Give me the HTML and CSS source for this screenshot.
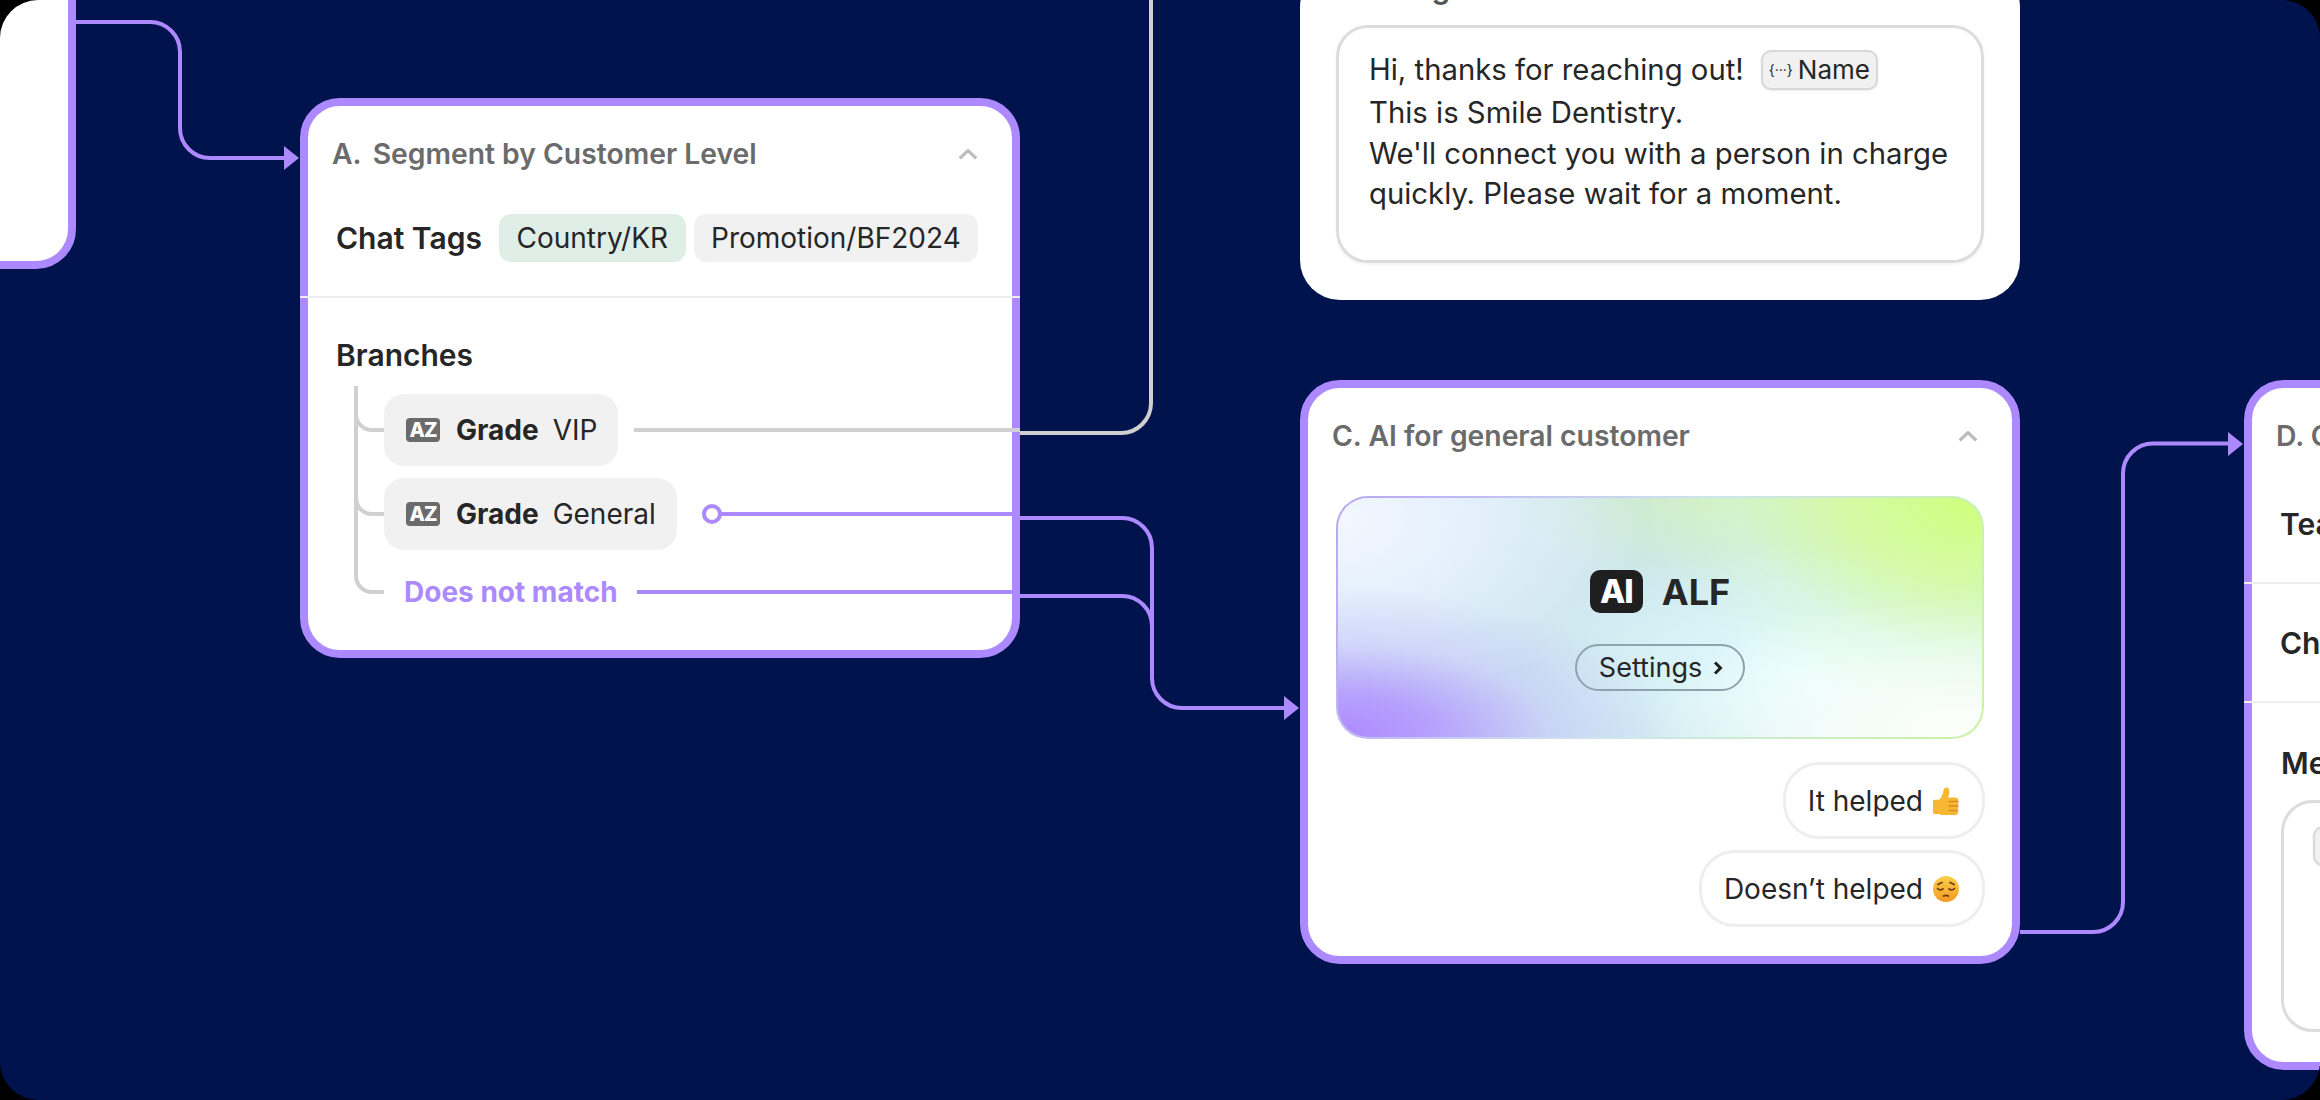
FILE: index.html
```html
<!DOCTYPE html>
<html lang="en">
<head>
    <meta charset="UTF-8">
    <title>Workflow</title>
    <link rel="stylesheet" href="styles.css">
</head>
<body>
<div class="canvas">

    <div class="node node-start"></div>

    <div class="node node-a">
        <div class="node-head">
            <div class="head-title"><span class="head-letter">A.</span>Segment by Customer Level</div>
            <svg class="chev" viewBox="0 0 18 10"><path d="M1.5 8.500 9 1.500l7.500 7"/></svg>
        </div>
        <div class="tag-row">
            <div class="label">Chat Tags</div>
            <div class="tag tag-green">Country/KR</div>
            <div class="tag">Promotion/BF2024</div>
        </div>
        <div class="divider"></div>
        <div class="branches">
            <div class="label">Branches</div>
            <div class="branch-list">
                <div class="branch"><span class="az">AZ</span><b>Grade</b><span>VIP</span></div>
                <div class="branch"><span class="az">AZ</span><b>Grade</b><span>General</span></div>
                <div class="branch-else">Does not match</div>
            </div>
        </div>
    </div>

    <div class="node node-b">
        <div class="label">Message</div>
        <div class="msg-box">
            <div class="msg-first">Hi, thanks for reaching out!<span class="chip"><span class="chip-icon">{···}</span>Name</span></div>
            <div>This is Smile Dentistry.</div>
            <div>We'll connect you with a person in charge</div>
            <div>quickly. Please wait for a moment.</div>
        </div>
    </div>

    <div class="node node-c">
        <div class="node-head">
            <div class="head-title">C. AI for general customer</div>
            <svg class="chev" viewBox="0 0 18 10"><path d="M1.5 8.500 9 1.500l7.500 7"/></svg>
        </div>
        <div class="hero">
            <div class="hero-title"><span class="ai-badge">AI</span>ALF</div>
            <div class="settings">Settings
                <svg class="settings-arrow" viewBox="0 0 10 14"><path d="M2 1.500 7.500 7 2 12.500"/></svg>
            </div>
        </div>
        <div class="replies">
            <div class="reply">It helped
                <svg class="emoji" viewBox="0 0 28 28">
                    <path fill="#f7b733" d="M1 14.500c0-1 .8-1.700 1.800-1.700h4.200c2.300-1.900 3.800-5 4.400-8.800C11.700 1.800 13 .5 14.500.5c1.900 0 2.800 1.700 2.800 3.700 0 2.200-.5 4.400-1.100 6.300h7.700c1.400 0 2.300 1 2.300 2.300v12.200c0 1.900-1.300 3-3 3H10.500c-1.300 0-2.500-.3-3.500-1H2.800C1.800 27 1 26.200 1 25.200z"/>
                    <path fill="none" stroke="#d98e1f" stroke-width="1.300" stroke-linecap="round" d="M17 14.500h9M17 19h9M17 23.500h8"/>
                </svg>
            </div>
            <div class="reply">Doesn’t helped
                <svg class="emoji" viewBox="0 0 28 28">
                    <defs>
                        <linearGradient id="faceFill" x1="0" y1="0" x2="0" y2="1">
                            <stop offset="0" stop-color="#fbcf4a"/>
                            <stop offset="1" stop-color="#f49a25"/>
                        </linearGradient>
                    </defs>
                    <circle cx="14" cy="14" r="13" fill="url(#faceFill)"/>
                    <path fill="none" stroke="#6b3f10" stroke-width="1.700" stroke-linecap="round" d="M5.500 13.500c1.500 1.700 4 1.700 5.500.3M17 13.800c1.500 1.400 4 1.400 5.500-.3M5.800 9.500 10 7.500M22.200 9.500 18 7.500M11.500 21c1.500-.8 3.500-.8 5 0"/>
                </svg>
            </div>
        </div>
    </div>

    <div class="node node-d">
        <div class="node-head">
            <div class="head-title">D. Connect to agent</div>
        </div>
        <div class="d-row d-row-team"><div class="label">Team</div></div>
        <div class="divider"></div>
        <div class="d-row"><div class="label">Chat Tags</div></div>
        <div class="divider"></div>
        <div class="d-msg">
            <div class="label">Message</div>
            <div class="d-box"><span class="chip d-chip">Name</span></div>
        </div>
    </div>

    <svg class="wires" viewBox="0 0 2320 1100">
        <g class="wire-grey">
            <path d="M356 386V576A16 16 0 0 0 372 592H384"/>
            <path d="M356 414A16 16 0 0 0 372 430H384"/>
            <path d="M356 498A16 16 0 0 0 372 514H384"/>
            <path d="M634 430H1020"/>
            <path d="M1020 433H1121A30 30 0 0 0 1151 403V0"/>
        </g>
        <g class="wire">
            <path d="M76 22H150A30 30 0 0 1 180 52V128A30 30 0 0 0 210 158H286"/>
            <path d="M721 514H1012"/>
            <path d="M637 592H1012"/>
            <path d="M1020 518H1122A30 30 0 0 1 1152 548V678A30 30 0 0 0 1182 708H1286"/>
            <path d="M1020 596H1122A30 30 0 0 1 1152 626"/>
            <path d="M2020 932H2093A30 30 0 0 0 2123 902V473.500A30 30 0 0 1 2153 443.500H2230"/>
            <circle class="wire-dot" cx="712" cy="514" r="8"/>
        </g>
        <g class="wire-head">
            <path d="M284 146 299 158 284 170z"/>
            <path d="M1284 696 1299 708 1284 720z"/>
            <path d="M2228 432 2243 444 2228 456z"/>
        </g>
    </svg>
</div>
</body>
</html>
```

FILE: styles.css
```css
html, body {
    margin: 0;
    padding: 0;
    background: #000;
}

body {
    font-family: Inter, "Noto Sans", sans-serif;
    font-size: 28px;
    color: #262626;
}

.canvas {
    position: relative;
    width: 2320px;
    height: 1100px;
    overflow: hidden;
    background: #00134d;
    border-radius: 38px;
}

/* diagram nodes */
.node {
    position: absolute;
    box-sizing: border-box;
    background: #fff;
    border: 8px solid #ad89ff;
    border-radius: 40px;
}

.node-start {
    left: -300px;
    top: -100px;
    width: 376px;
    height: 369px;
}

.node-a {
    left: 300px;
    top: 98px;
    width: 720px;
    height: 560px;
}

.node-b {
    left: 1300px;
    top: -33px;
    width: 720px;
    height: 333px;
    border: 0;
    padding: 0 36px;
}

.node-b .label {
    color: #555;
}

.node-c {
    left: 1300px;
    top: 380px;
    width: 720px;
    height: 584px;
}

.node-d {
    left: 2244px;
    top: 380px;
    width: 720px;
    height: 690px;
}

.node-head {
    display: flex;
    align-items: center;
    justify-content: space-between;
    height: 96px;
    padding: 0 34px 0 24px;
}

.head-title {
    font-size: 28.300px;
    font-weight: 600;
    color: #6b6b6b;
}

.head-letter {
    margin-right: 11px;
}

.chev {
    width: 20px;
    height: 11px;
    fill: none;
    stroke: #bcbcbc;
    stroke-width: 3;
}

.label {
    font-size: 30px;
    font-weight: 600;
    line-height: 40px;
}

.divider {
    height: 2px;
    margin: 0 -8px;
    background: #eeeeee;
}

/* card A */
.tag-row {
    display: flex;
    align-items: center;
    height: 48px;
    padding: 12px 0 34px 28px;
}

.tag-row .label {
    margin-right: 17px;
}

.tag {
    height: 48px;
    line-height: 48px;
    padding: 0 17.500px;
    margin-right: 8px;
    border-radius: 12px;
    background: #f1f1f1;
}

.tag-green {
    background: #dfeee6;
}

.branches {
    padding: 37px 0 0 28px;
}

.branch-list {
    display: flex;
    flex-direction: column;
    align-items: flex-start;
    gap: 12px;
    margin: 19px 0 0 48px;
}

.branch {
    display: flex;
    align-items: center;
    height: 72px;
    padding: 0 21px 0 22px;
    border-radius: 20px;
    background: #f1f1f1;
}

.branch b {
    font-weight: 700;
    margin: 0 14px 0 16px;
}

.az {
    width: 34px;
    height: 24px;
    line-height: 24px;
    text-align: center;
    border-radius: 4px;
    font-size: 20px;
    font-weight: 800;
    letter-spacing: -1px;
    color: #fff;
    background: #6b6b6b;
}

.branch-else {
    margin: 10px 0 0 20px;
    line-height: 40px;
    font-weight: 700;
    color: #ad89ff;
}

/* card B */
.msg-box {
    box-sizing: border-box;
    height: 238px;
    margin-top: 18px;
    padding: 19px 30px 0;
    border: 3px solid #dcdcdc;
    border-radius: 32px;
    box-shadow: 0 2px 3px rgba(0, 0, 0, .05);
    font-size: 29.300px;
    line-height: 40.500px;
    color: #262626;
}

.msg-first {
    display: flex;
    align-items: center;
    height: 46px;
}

.chip {
    display: inline-flex;
    align-items: center;
    box-sizing: border-box;
    height: 40px;
    margin-left: 17px;
    padding: 0 6px;
    border: 2px solid #d8d8d8;
    border-radius: 10px;
    background: #f1f1f1;
    box-shadow: 0 1px 2px rgba(0, 0, 0, .08);
    font-size: 26px;
}

.chip-icon {
    margin-right: 5px;
    font-size: 14px;
}

/* card C */
.hero {
    box-sizing: border-box;
    display: flex;
    flex-direction: column;
    align-items: center;
    width: 648px;
    height: 243px;
    margin: 12px 0 0 28px;
    padding-top: 72px;
    border: 2px solid transparent;
    border-radius: 32px;
    background:
        radial-gradient(ellipse 340px 150px at 0% 100%, #ad89ff 0%, rgba(178, 148, 255, .85) 28%, rgba(196, 190, 255, .45) 62%, rgba(205, 215, 255, 0) 100%) padding-box,
        radial-gradient(ellipse 340px 210px at 100% 0%, #cfff7a 0%, rgba(214, 255, 150, .8) 40%, rgba(220, 255, 200, .35) 72%, rgba(220, 255, 210, 0) 100%) padding-box,
        radial-gradient(ellipse 340px 150px at 100% 100%, #fdfff8 0%, rgba(250, 255, 250, .8) 45%, rgba(240, 255, 255, 0) 100%) padding-box,
        radial-gradient(ellipse 300px 190px at 0% 10%, #f3f7ff 0%, rgba(232, 242, 255, .75) 50%, rgba(226, 238, 250, 0) 100%) padding-box,
        radial-gradient(ellipse 280px 130px at 72% 72%, #e2fdff 0%, rgba(226, 253, 255, 0) 100%) padding-box,
        radial-gradient(ellipse 220px 90px at 58% 0%, #cfeec6 0%, rgba(207, 238, 198, 0) 100%) padding-box,
        linear-gradient(#cde6ee, #cde6ee) padding-box,
        linear-gradient(115deg, #b7a5f5 0%, #cfe6ee 50%, #c9f3a0 100%) border-box;
}

.hero-title {
    display: flex;
    align-items: center;
    height: 43px;
    font-size: 36px;
    font-weight: 700;
}

.ai-badge {
    width: 53px;
    height: 43px;
    line-height: 43px;
    margin-right: 19px;
    text-align: center;
    border-radius: 10px;
    font-size: 33px;
    font-weight: 800;
    letter-spacing: -1px;
    color: #fff;
    background: #1f1f1f;
}

.settings {
    display: flex;
    align-items: center;
    box-sizing: border-box;
    height: 47px;
    margin-top: 31px;
    padding: 0 20px 0 22px;
    border: 2px solid #8ea3ad;
    border-radius: 24px;
    font-size: 27px;
}

.settings-arrow {
    width: 10px;
    height: 14px;
    margin-left: 11px;
    fill: none;
    stroke: #1f1f1f;
    stroke-width: 3;
}

.replies {
    display: flex;
    flex-direction: column;
    align-items: flex-end;
    gap: 11px;
    margin: 23px 27px 0 0;
}

.reply {
    display: flex;
    align-items: center;
    box-sizing: border-box;
    height: 77px;
    padding: 0 22px;
    border: 3px solid #eeeeee;
    border-radius: 36px;
}

.emoji {
    width: 28px;
    height: 28px;
    margin-left: 9px;
}

/* card D */
.d-row {
    display: flex;
    align-items: center;
    height: 117px;
    padding: 0 28px;
}

.d-row-team {
    box-sizing: border-box;
    height: 98px;
    padding-bottom: 18px;
}

.d-msg {
    padding: 40px 29px 0;
}

.d-box {
    box-sizing: border-box;
    height: 232px;
    margin-top: 17px;
    padding: 23px 29px;
    border: 3px solid #dcdcdc;
    border-radius: 32px;
}

.d-chip {
    margin-left: 0;
}

/* connectors */
.wires {
    position: absolute;
    left: 0;
    top: 0;
    width: 2320px;
    height: 1100px;
    pointer-events: none;
}

.wires path {
    fill: none;
    stroke-width: 4;
}

.wire-grey path {
    stroke: #d0d0d0;
}

.wire path {
    stroke: #ad89ff;
}

.wire-dot {
    fill: #fff;
    stroke: #ad89ff;
    stroke-width: 4;
}

.wires .wire-head path {
    fill: #ad89ff;
    stroke: none;
}
```
